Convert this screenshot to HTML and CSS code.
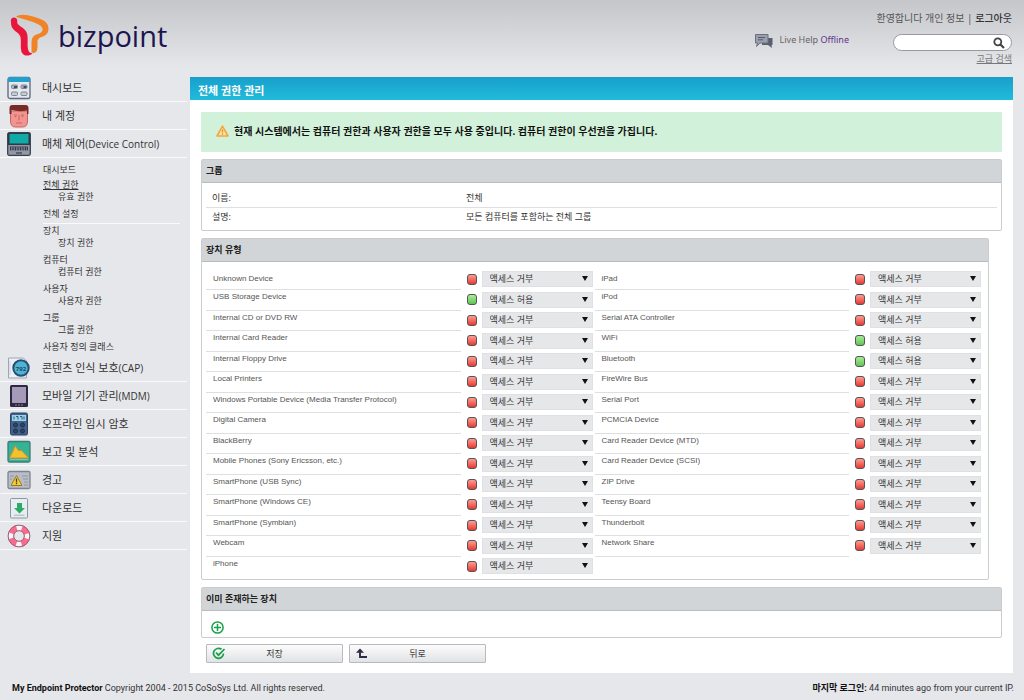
FILE: index.html
```html
<!DOCTYPE html>
<html lang="ko">
<head>
<meta charset="utf-8">
<title>bizpoint</title>
<meta name="viewport" content="width=device-width, initial-scale=1">
<link rel="stylesheet" href="styles.css">
</head>
<body>
<header class="header">
  <a class="logo" href="#">
    <svg class="logo-mark" viewBox="0 0 40 43" aria-hidden="true">
      <path d="M6 3C8 .3 14 .2 19 1.500C27 3.500 35 5.500 37.500 10.500C39.500 15 38.500 20 34 22C31 23.300 28 24 27.500 27V33C27.500 38 25 40 21.500 38.500V29C21.500 23 24 21 28 20C32 18.500 33.500 16.500 32 13.500C29.500 9.500 21 7.500 15 5.500C11 4.200 9 3.500 6 3Z" fill="#f08326"/>
      <path d="M.8 6.500C1 3 6 2.500 7.200 6V8.500C8 12.500 15.500 13.500 17.200 20C18.300 25 17 31 18 35C18.500 38 20 39 22.500 39.500C19 42.500 13.500 42.500 11.500 38C10 33 11.500 28 10.500 23C9 17.500 2.500 17.500 1.200 11Z" fill="#e8163c"/>
    </svg>
    <span class="logo-name">bizpoint</span>
  </a>
  <div class="live-help">
    <svg class="chat" viewBox="0 0 18 14" aria-hidden="true">
      <path d="M7 4h10.500v7H16.500L17 14l-4-3H7z" fill="#5a5e6d"/>
      <path d="M.5.500h12.500v8.500H5L1.500 12.500 2.500 9h-2z" fill="#9a9fae" stroke="#6b7080"/>
      <path d="M3 3.500h7M3 5.800h5" stroke="#575b69"/>
    </svg>
    <span>Live Help <a href="#">Offline</a></span>
  </div>
  <div class="account">
    <div class="welcome">환영합니다 <a href="#">개인 정보</a> | <a class="logout" href="#">로그아웃</a></div>
    <form class="search">
      <input type="text" aria-label="검색">
      <button type="button" aria-label="검색"><svg viewBox="0 0 12 12"><circle cx="4.800" cy="4.800" r="3.500" fill="none" stroke="#444" stroke-width="1.800"/><path d="M7.500 7.500l3.500 3.500" stroke="#444" stroke-width="2.200"/></svg></button>
    </form>
    <a class="advanced" href="#">고급 검색</a>
  </div>
</header>

<div class="body">
  <nav class="sidebar">
    <a class="item" href="#">
      <svg viewBox="0 0 24 24"><rect x="1" y="1.500" width="22" height="21" rx="2" fill="#e4e8ed" stroke="#59687d" stroke-width="1.300"/><path d="M1 6V3q0-2 2-2h18q2 0 2 2v3z" fill="#239fce"/><g stroke="#7d8795" fill="#aab2bd"><rect x="4.500" y="9" width="6" height="3.500" rx="1"/><rect x="14" y="9" width="6" height="3.500" rx="1"/><rect x="4.500" y="16" width="6" height="3.500" rx="1" fill="#c9ced5"/><rect x="14" y="16" width="6" height="3.500" rx="1" fill="#c9ced5"/></g><path d="M7 10h3v2H7zM16.500 10h3v2h-3z" fill="#454d5b"/></svg>
      <span>대시보드</span></a>
    <a class="item" href="#">
      <svg viewBox="0 0 24 24"><path d="M3.500 7h17v10q0 6-5 6h-7q-5 0-5-6z" fill="#f0958f" stroke="#c76560"/><path d="M2.500 10V4q0-3 3-3h13q3 0 3 3v6H20V6.500Q12 8 4.500 6v4z" fill="#762b27"/><path d="M7 11h3M14 11h3M12 11v5h-1M9 19h6" stroke="#cf6662" fill="none"/><circle cx="8.500" cy="12.500" r=".8" fill="#c26461"/><circle cx="15.500" cy="12.500" r=".8" fill="#c26461"/></svg>
      <span>내 계정</span></a>
    <a class="item" href="#">
      <svg viewBox="0 0 24 24"><rect x=".7" y=".7" width="22.600" height="22.600" rx="1.500" fill="#9398a5" stroke="#3b4051" stroke-width="1.300"/><path d="M1 1h22v12H1z" fill="#303849"/><path d="M2.500 2h19v9.500h-19z" fill="#11aaa5"/><path d="M3 14.500h18v4H3z" fill="#383d4d"/><path d="M4 16h16M4 18h16" stroke="#a8aebb" stroke-dasharray="1.500 1"/><path d="M9 20h6v2H9z" fill="#5b6070"/></svg>
      <span>매체 제어<span class="latin">(Device Control)</span></span></a>
    <div class="submenu">
      <a href="#">대시보드</a>
      <a class="current" href="#">전체 권한</a>
      <a class="child" href="#">유효 권한</a>
      <a href="#">전체 설정</a>
      <hr>
      <a href="#">장치</a>
      <a class="child" href="#">장치 권한</a>
      <a href="#">컴퓨터</a>
      <a class="child" href="#">컴퓨터 권한</a>
      <a href="#">사용자</a>
      <a class="child" href="#">사용자 권한</a>
      <a href="#">그룹</a>
      <a class="child" href="#">그룹 권한</a>
      <a href="#">사용자 정의 클래스</a>
    </div>
    <a class="item" href="#">
      <svg viewBox="0 0 24 24"><path d="M1.500 2h15l3 3v17h-18z" fill="#edf0f4" stroke="#98a6b9"/><path d="M3 5v14" stroke="#cbd2dc"/><circle cx="14" cy="12" r="7.700" fill="#4db5d4" stroke="#294d73" stroke-width="2"/><text x="14" y="14.500" text-anchor="middle" class="badge-text">792</text></svg>
      <span>콘텐츠 인식 보호<span class="latin">(CAP)</span></span></a>
    <a class="item" href="#">
      <svg viewBox="0 0 24 24"><rect x="3" y="1" width="18" height="22" rx="1.500" fill="#302743"/><path d="M5 3h14v16H5z" fill="#a59bb9"/><path d="M8 21h8" stroke="#8c819d" stroke-dasharray="2 1"/></svg>
      <span>모바일 기기 관리<span class="latin">(MDM)</span></span></a>
    <a class="item" href="#">
      <svg viewBox="0 0 24 24"><rect x="3.500" y="1" width="17" height="22" rx="1.500" fill="#41618a" stroke="#2b4263"/><path d="M5 3h14v6H5z" fill="#9bd3ea"/><path d="M7 4.500v3M9 4.500h2v3M13 4.500h2v3M17 4.500v3" stroke="#315a80" fill="none"/><g fill="#2f4668" stroke="#1e304d"><circle cx="8.500" cy="13" r="2"/><circle cx="15.500" cy="13" r="2"/><circle cx="8.500" cy="19" r="2"/><circle cx="15.500" cy="19" r="2"/></g></svg>
      <span>오프라인 임시 암호</span></a>
    <a class="item" href="#">
      <svg viewBox="0 0 24 24"><rect x="1" y="1.500" width="22" height="20.500" rx="1.500" fill="#35b395" stroke="#3f7c75" stroke-width="1.300"/><path d="M2.500 18l3.500-7 2-5 4 5 2-1 7.500 8z" fill="#f2c32d" stroke="#d68c36"/><path d="M3 19.500h18" stroke="#70c7ae"/></svg>
      <span>보고 및 분석</span></a>
    <a class="item" href="#">
      <svg viewBox="0 0 24 24"><rect x="1" y="3.500" width="22" height="17" rx="1.500" fill="#b9bec6" stroke="#7d8490" stroke-width="1.300"/><path d="M15 8h6M16 11h5M17 14h4M17 17h4M3 8h4M3 11h2" stroke="#8e959f"/><path d="M9.500 7.500l5.500 10H4z" fill="#f7cf36" stroke="#9a7b22" stroke-linejoin="round"/><path d="M9.500 10.500v4M9.500 15v1.300" stroke="#544418" stroke-width="1.300"/></svg>
      <span>경고</span></a>
    <a class="item" href="#">
      <svg viewBox="0 0 24 24"><rect x="3.500" y="2.500" width="17" height="19.500" rx="1" fill="#e7edf0" stroke="#8799a8"/><path d="M10 7h5v5h3l-5.500 5.500L7 12h3z" fill="#2daa66"/><path d="M7 19.200h10.500" stroke="#a3b6b8"/></svg>
      <span>다운로드</span></a>
    <a class="item" href="#">
      <svg viewBox="0 0 24 24"><circle cx="12" cy="12" r="8.200" fill="none" stroke="#f96a8c" stroke-width="5.500"/><circle cx="12" cy="12" r="8.200" fill="none" stroke="#faf4f6" stroke-width="5.500" stroke-dasharray="5.280 7.600" stroke-dashoffset="2.640"/><circle cx="12" cy="12" r="10.900" fill="none" stroke="#955c72"/><circle cx="12" cy="12" r="5.300" fill="none" stroke="#955c72"/></svg>
      <span>지원</span></a>
  </nav>

  <main class="main">
    <h1 class="title">전체 권한 관리</h1>
    <div class="content">
      <div class="alert">
        <svg viewBox="0 0 13 12" aria-hidden="true"><path d="M6.500 1.200L12 11H1z" fill="#fbe3ae" stroke="#f3a73c" stroke-width="1.600" stroke-linejoin="round"/><path d="M6.500 4.500v3M6.500 8.300v1.400" stroke="#ea9730" stroke-width="1.400"/></svg>
        <strong>현재 시스템에서는 컴퓨터 권한과 사용자 권한을 모두 사용 중입니다. 컴퓨터 권한이 우선권을 가집니다.</strong>
      </div>

      <section class="panel">
        <h2>그룹</h2>
        <dl class="details">
          <div><dt>이름:</dt><dd>전체</dd></div>
          <div><dt>설명:</dt><dd>모든 컴퓨터를 포함하는 전체 그룹</dd></div>
        </dl>
      </section>

      <section class="panel panel-devices">
        <h2>장치 유형</h2>
        <table class="devices">
          <tbody>
          <tr><td class="name"><label for="d1">Unknown Device</label></td><td class="state"><i class="deny"></i></td><td class="access"><span><select id="d1"><option>액세스 거부</option><option>액세스 허용</option></select></span></td><td class="name"><label for="e1">iPad</label></td><td class="state"><i class="deny"></i></td><td class="access"><span><select id="e1"><option>액세스 거부</option><option>액세스 허용</option></select></span></td></tr>
          <tr><td class="name"><label for="d2">USB Storage Device</label></td><td class="state"><i class="allow"></i></td><td class="access"><span><select id="d2"><option>액세스 거부</option><option selected>액세스 허용</option></select></span></td><td class="name"><label for="e2">iPod</label></td><td class="state"><i class="deny"></i></td><td class="access"><span><select id="e2"><option>액세스 거부</option><option>액세스 허용</option></select></span></td></tr>
          <tr><td class="name"><label for="d3">Internal CD or DVD RW</label></td><td class="state"><i class="deny"></i></td><td class="access"><span><select id="d3"><option>액세스 거부</option><option>액세스 허용</option></select></span></td><td class="name"><label for="e3">Serial ATA Controller</label></td><td class="state"><i class="deny"></i></td><td class="access"><span><select id="e3"><option>액세스 거부</option><option>액세스 허용</option></select></span></td></tr>
          <tr><td class="name"><label for="d4">Internal Card Reader</label></td><td class="state"><i class="deny"></i></td><td class="access"><span><select id="d4"><option>액세스 거부</option><option>액세스 허용</option></select></span></td><td class="name"><label for="e4">WiFi</label></td><td class="state"><i class="allow"></i></td><td class="access"><span><select id="e4"><option>액세스 거부</option><option selected>액세스 허용</option></select></span></td></tr>
          <tr><td class="name"><label for="d5">Internal Floppy Drive</label></td><td class="state"><i class="deny"></i></td><td class="access"><span><select id="d5"><option>액세스 거부</option><option>액세스 허용</option></select></span></td><td class="name"><label for="e5">Bluetooth</label></td><td class="state"><i class="allow"></i></td><td class="access"><span><select id="e5"><option>액세스 거부</option><option selected>액세스 허용</option></select></span></td></tr>
          <tr><td class="name"><label for="d6">Local Printers</label></td><td class="state"><i class="deny"></i></td><td class="access"><span><select id="d6"><option>액세스 거부</option><option>액세스 허용</option></select></span></td><td class="name"><label for="e6">FireWire Bus</label></td><td class="state"><i class="deny"></i></td><td class="access"><span><select id="e6"><option>액세스 거부</option><option>액세스 허용</option></select></span></td></tr>
          <tr><td class="name"><label for="d7">Windows Portable Device (Media Transfer Protocol)</label></td><td class="state"><i class="deny"></i></td><td class="access"><span><select id="d7"><option>액세스 거부</option><option>액세스 허용</option></select></span></td><td class="name"><label for="e7">Serial Port</label></td><td class="state"><i class="deny"></i></td><td class="access"><span><select id="e7"><option>액세스 거부</option><option>액세스 허용</option></select></span></td></tr>
          <tr><td class="name"><label for="d8">Digital Camera</label></td><td class="state"><i class="deny"></i></td><td class="access"><span><select id="d8"><option>액세스 거부</option><option>액세스 허용</option></select></span></td><td class="name"><label for="e8">PCMCIA Device</label></td><td class="state"><i class="deny"></i></td><td class="access"><span><select id="e8"><option>액세스 거부</option><option>액세스 허용</option></select></span></td></tr>
          <tr><td class="name"><label for="d9">BlackBerry</label></td><td class="state"><i class="deny"></i></td><td class="access"><span><select id="d9"><option>액세스 거부</option><option>액세스 허용</option></select></span></td><td class="name"><label for="e9">Card Reader Device (MTD)</label></td><td class="state"><i class="deny"></i></td><td class="access"><span><select id="e9"><option>액세스 거부</option><option>액세스 허용</option></select></span></td></tr>
          <tr><td class="name"><label for="d10">Mobile Phones (Sony Ericsson, etc.)</label></td><td class="state"><i class="deny"></i></td><td class="access"><span><select id="d10"><option>액세스 거부</option><option>액세스 허용</option></select></span></td><td class="name"><label for="e10">Card Reader Device (SCSI)</label></td><td class="state"><i class="deny"></i></td><td class="access"><span><select id="e10"><option>액세스 거부</option><option>액세스 허용</option></select></span></td></tr>
          <tr><td class="name"><label for="d11">SmartPhone (USB Sync)</label></td><td class="state"><i class="deny"></i></td><td class="access"><span><select id="d11"><option>액세스 거부</option><option>액세스 허용</option></select></span></td><td class="name"><label for="e11">ZIP Drive</label></td><td class="state"><i class="deny"></i></td><td class="access"><span><select id="e11"><option>액세스 거부</option><option>액세스 허용</option></select></span></td></tr>
          <tr><td class="name"><label for="d12">SmartPhone (Windows CE)</label></td><td class="state"><i class="deny"></i></td><td class="access"><span><select id="d12"><option>액세스 거부</option><option>액세스 허용</option></select></span></td><td class="name"><label for="e12">Teensy Board</label></td><td class="state"><i class="deny"></i></td><td class="access"><span><select id="e12"><option>액세스 거부</option><option>액세스 허용</option></select></span></td></tr>
          <tr><td class="name"><label for="d13">SmartPhone (Symbian)</label></td><td class="state"><i class="deny"></i></td><td class="access"><span><select id="d13"><option>액세스 거부</option><option>액세스 허용</option></select></span></td><td class="name"><label for="e13">Thunderbolt</label></td><td class="state"><i class="deny"></i></td><td class="access"><span><select id="e13"><option>액세스 거부</option><option>액세스 허용</option></select></span></td></tr>
          <tr><td class="name"><label for="d14">Webcam</label></td><td class="state"><i class="deny"></i></td><td class="access"><span><select id="d14"><option>액세스 거부</option><option>액세스 허용</option></select></span></td><td class="name"><label for="e14">Network Share</label></td><td class="state"><i class="deny"></i></td><td class="access"><span><select id="e14"><option>액세스 거부</option><option>액세스 허용</option></select></span></td></tr>
          <tr><td class="name"><label for="d15">iPhone</label></td><td class="state"><i class="deny"></i></td><td class="access"><span><select id="d15"><option>액세스 거부</option><option>액세스 허용</option></select></span></td><td colspan="3"></td></tr>
          </tbody>
        </table>
      </section>

      <section class="panel">
        <h2>이미 존재하는 장치</h2>
        <div class="existing">
          <button type="button" aria-label="추가"><svg viewBox="0 0 13 13"><circle cx="6.500" cy="6.500" r="5.600" fill="#fff" stroke="#17a04a" stroke-width="1.500"/><path d="M6.500 3v7M3 6.500h7" stroke="#17a04a" stroke-width="1.500"/></svg></button>
        </div>
      </section>

      <div class="actions">
        <button type="button"><svg viewBox="0 0 14 13"><path d="M11.500 6.500A5 5 0 1 1 9.500 2.300" fill="none" stroke="#17a04a" stroke-width="1.700"/><path d="M4 5.500l2.500 2.700L12.500 2" fill="none" stroke="#17a04a" stroke-width="1.700"/></svg><span>저장</span></button>
        <button type="button"><svg viewBox="0 0 14 13"><path d="M5 4v6h7" fill="none" stroke="#2c2c48" stroke-width="1.900"/><path d="M5 1.500L1 5.800h8z" fill="#2c2c48"/></svg><span>뒤로</span></button>
      </div>
    </div>
  </main>
</div>

<footer class="footer">
  <span><strong>My Endpoint Protector</strong> Copyright 2004 - 2015 CoSoSys Ltd. All rights reserved.</span>
  <span><strong>마지막 로그인:</strong> 44 minutes ago from your current IP.</span>
</footer>
</body>
</html>
```

FILE: styles.css
```css
* { box-sizing: border-box; }

body {
  margin: 0;
  background: #e6e7eb;
  color: #333;
  font-family: "Noto Sans", "Noto Sans CJK KR", sans-serif;
  font-size: 9px;
  line-height: 12px;
}

a { color: inherit; text-decoration: none; }
svg { display: block; flex: none; }
button, input, select { font: inherit; color: inherit; margin: 0; }
h1, h2, dl, dd { margin: 0; }

/* Header */
.header {
  display: flex;
  align-items: flex-start;
  min-height: 74px;
  padding: 12px 12px 0 10px;
  background: linear-gradient(#c5c6ca, #e6e7eb 68px);
}
.logo { display: flex; gap: 8px; padding-top: 2px; color: #1c1650; }
.logo-mark { width: 40px; height: 43px; }
.logo-name { font-family: "Open Sans", sans-serif; font-size: 29px; line-height: 44px; }
.live-help {
  display: flex;
  gap: 7px;
  margin-left: auto;
  padding-top: 22px;
  color: #666;
}
.live-help a { color: #60358e; }
.chat { width: 18px; height: 14px; }
.account {
  display: flex;
  flex-direction: column;
  align-items: flex-end;
  width: 163px;
  color: #555;
}
.welcome { font-size: 10px; white-space: nowrap; }
.logout { color: #333; font-weight: 500; }
.search {
  display: flex;
  align-items: center;
  width: 119px;
  height: 17px;
  margin: 10px 0 2px;
  padding: 0 6px;
  border: 1px solid #999aa0;
  border-radius: 9px;
  background: #fff;
}
.search input { flex: 1; min-width: 0; height: 13px; padding: 0; border: 0; outline: 0; background: none; }
.search button { padding: 0; border: 0; background: none; }
.search svg { width: 12px; height: 12px; }
.advanced { color: #777; text-decoration: underline; }

/* Sidebar */
.body { display: flex; align-items: flex-start; }
.sidebar { flex: none; width: 187px; }
.item {
  display: flex;
  align-items: center;
  gap: 11px;
  height: 28px;
  padding-left: 7px;
  border-bottom: 1px solid #fafafb;
  font-size: 11px;
}
.item svg { width: 24px; height: 24px; }
.latin { font-family: "Open Sans", sans-serif; font-size: 10px; }
.badge-text { font-size: 6px; font-weight: 700; fill: #1f4469; }
.submenu { display: flex; flex-direction: column; padding: 6px 7px 1px 43px; }
.submenu .current { margin-top: 3px; text-decoration: underline; }
.submenu .child { margin-bottom: 5px; padding-left: 15px; }
.submenu hr { width: 100%; margin: 3px 0 1px; border: 0; border-top: 1px solid #fafafb; }

/* Main */
.main { flex: 1; min-width: 0; margin: 3px 11px 0 3px; background: #fff; }
.title {
  padding: 7px 8px 2px;
  background: linear-gradient(#189fcb, #20bbdc);
  color: #fff;
  font-size: 11px;
  line-height: 14px;
  font-weight: 700;
}
.content { padding: 12px 11px 10px; }
.alert {
  display: flex;
  align-items: center;
  gap: 5px;
  min-height: 40px;
  padding: 0 15px 2px;
  background: #d1f1da;
  color: #111;
  font-size: 10px;
}
.alert svg { width: 13px; height: 12px; }
.panel { margin-top: 7px; border: 1px solid #cbccce; border-radius: 2px; }
.panel h2 {
  padding: 5px 4px;
  border-bottom: 1px solid #b9bcbf;
  background: #d2d5d8;
  color: #222;
  font-size: 9px;
  font-weight: 700;
}
.details { padding: 6px 4px 4px; }
.details div { display: flex; padding: 3px 6px; }
.details div:first-child { border-bottom: 1px solid #dedfe0; }
.details dt { width: 254px; }

.panel-devices { margin-right: 13px; }
.devices {
  width: calc(100% - 9px);
  margin: 7px 5px 3px 4px;
  border-collapse: collapse;
  table-layout: fixed;
  color: #555;
}
.devices td { height: 20px; padding: 0; }
.devices tr:nth-child(even) td { height: 21px; }
.devices .name {
  padding: 1px 7px 0;
  border-bottom: 1px solid #dedfe0;
  font-family: "Liberation Sans", sans-serif;
  font-size: 8px;
  vertical-align: top;
}
.devices tr:first-child .name { padding-top: 0; vertical-align: middle; }
.devices tr:last-child .name { border-bottom: 0; }
.devices .state { width: 21px; padding-left: 6px; }
.devices .access { width: 113px; padding-right: 2px; }
.state i { display: block; width: 10px; height: 11px; border: 1px solid; border-radius: 3px; }
.deny { border-color: #a33a35; background: linear-gradient(#ff9c92, #e43a35); }
.allow { border-color: #4b9a45; background: linear-gradient(#aaea98, #62c555); }
.access span { display: block; position: relative; }
.access span::after {
  content: "";
  position: absolute;
  top: 5px;
  right: 5px;
  border: solid transparent;
  border-width: 5px 3px 0;
  border-top-color: #111;
  pointer-events: none;
}
.access select {
  display: block;
  width: 100%;
  height: 16px;
  padding: 0 7px;
  border: 1px solid #dfe0e3;
  border-radius: 0;
  background: #e6e7e9;
  color: #333;
  line-height: 14px;
  appearance: none;
}

.existing { padding: 10px 9px 3px; }
.existing button { display: block; padding: 0; border: 0; background: none; }
.existing svg { width: 13px; height: 13px; }
.actions { display: flex; gap: 6px; padding: 6px 5px 0; }
.actions button {
  display: flex;
  align-items: center;
  width: 137px;
  height: 19px;
  padding: 0 5px;
  border: 1px solid #b9babd;
  border-radius: 1px;
  background: linear-gradient(#fcfcfc, #e1e2e5);
}
.actions svg { width: 14px; height: 13px; }
.actions span { flex: 1; padding-right: 14px; }

/* Footer */
.footer {
  display: flex;
  justify-content: space-between;
  padding: 9px 10px 6px 12px;
  font-family: Roboto, "Noto Sans CJK KR", sans-serif;
}
.footer strong { color: #111; }
```
